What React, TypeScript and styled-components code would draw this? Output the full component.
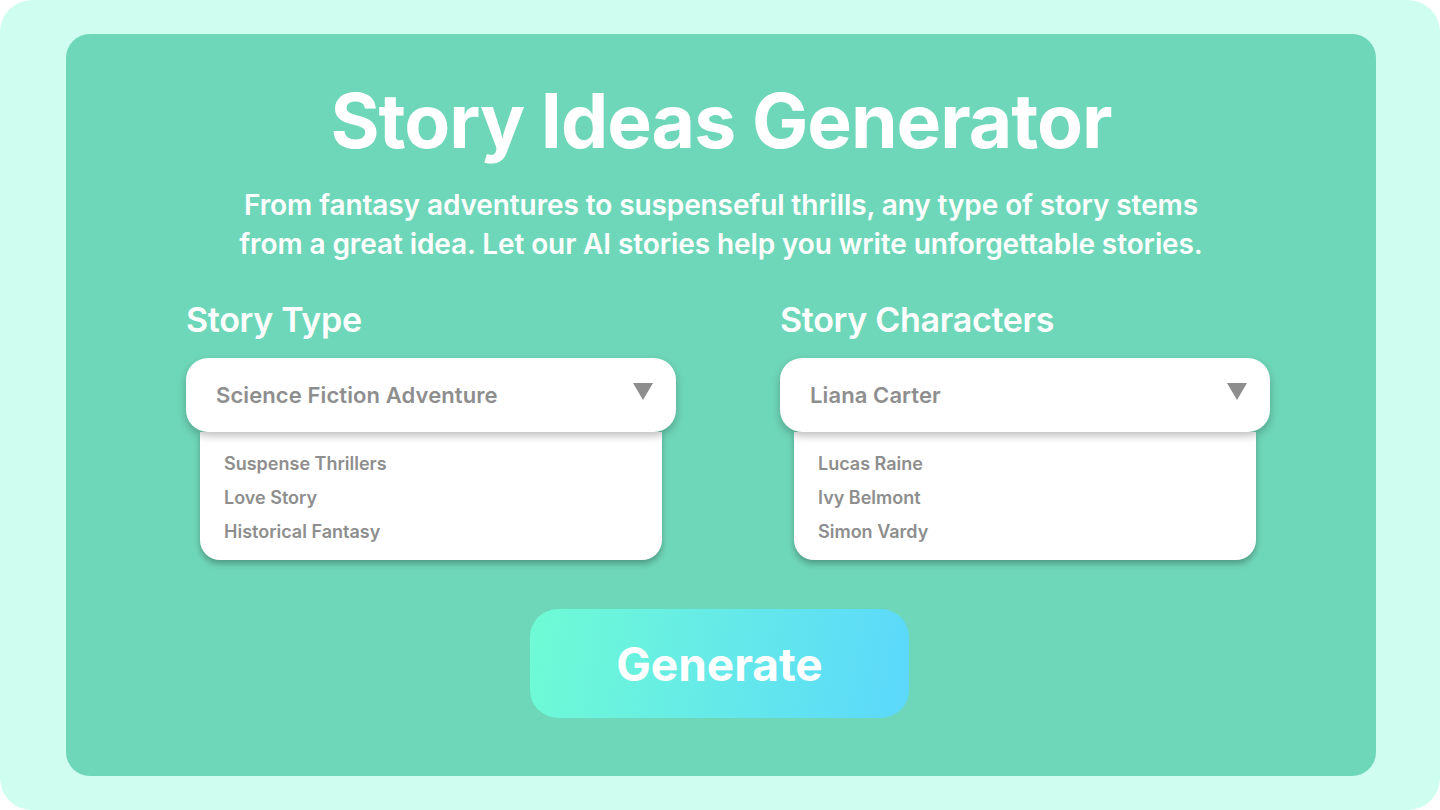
import styled, { createGlobalStyle } from "styled-components";

const GlobalStyle = createGlobalStyle`
  html, body {
    margin: 0;
    padding: 0;
    background: #ffffff;
  }
  body {
    font-family: Inter, "Open Sans", sans-serif;
  }
`;

const storyTypes = ["Suspense Thrillers", "Love Story", "Historical Fantasy"];
const characters = ["Lucas Raine", "Ivy Belmont", "Simon Vardy"];

type PickerProps = {
  label: string;
  value: string;
  options: string[];
};

function Picker({ label, value, options }: PickerProps) {
  return (
    <Column>
      <Label>{label}</Label>
      <SelectBox>
        <span>{value}</span>
        <Caret />
      </SelectBox>
      <OptionList>
        {options.map((o) => (
          <Option key={o}>{o}</Option>
        ))}
      </OptionList>
    </Column>
  );
}

export default function App() {
  return (
    <>
      <GlobalStyle />
      <Frame>
        <Card>
          <Title>Story Ideas Generator</Title>
          <Subtitle>
            From fantasy adventures to suspenseful thrills, any type of story stems
            <br />
            from a great idea. Let our AI stories help you write unforgettable stories.
          </Subtitle>
          <Pickers>
            <Picker label="Story Type" value="Science Fiction Adventure" options={storyTypes} />
            <Picker label="Story Characters" value="Liana Carter" options={characters} />
          </Pickers>
          <GenerateButton>Generate</GenerateButton>
        </Card>
      </Frame>
    </>
  );
}

const Frame = styled.div`
  width: 1440px;
  height: 810px;
  box-sizing: border-box;
  padding: 34px 64px 34px 66px;
  background: #cffdef;
  border-radius: 32px;
`;

const Card = styled.main`
  height: 100%;
  box-sizing: border-box;
  background: #6fd7b9;
  border-radius: 24px;
  display: flex;
  flex-direction: column;
  align-items: center;
  padding-top: 42px;
  color: #ffffff;
`;

const Title = styled.h1`
  margin: 0;
  font-size: 75px;
  font-weight: 700;
  line-height: 90px;
  letter-spacing: -1px;
`;

const Subtitle = styled.p`
  margin: 20px 0 0;
  font-size: 28px;
  font-weight: 600;
  line-height: 39px;
  text-align: center;
  letter-spacing: -0.1px;
`;

const Pickers = styled.div`
  display: grid;
  grid-template-columns: 490px 490px;
  column-gap: 104px;
  margin-top: 36px;
  padding-left: 14px;
`;

const Column = styled.div`
  display: flex;
  flex-direction: column;
`;

const Label = styled.div`
  font-size: 34px;
  font-weight: 600;
  line-height: 40px;
  margin-bottom: 18px;
  letter-spacing: -0.3px;
`;

const SelectBox = styled.div`
  position: relative;
  z-index: 2;
  height: 74px;
  box-sizing: border-box;
  display: flex;
  align-items: center;
  justify-content: space-between;
  padding: 0 23px 0 30px;
  background: #ffffff;
  border-radius: 22px;
  box-shadow: 0 4px 8px rgba(0, 0, 0, 0.25);
  color: #8e8e8e;
  font-size: 22px;
  font-weight: 600;
  letter-spacing: 0.1px;
`;

const Caret = styled.span`
  width: 0;
  height: 0;
  margin-top: -8px;
  border-left: 10px solid transparent;
  border-right: 10px solid transparent;
  border-top: 17px solid #8e8e8e;
`;

const OptionList = styled.ul`
  list-style: none;
  margin: 0 14px;
  padding: 15px 24px 11px;
  background: #ffffff;
  border-radius: 0 0 20px 20px;
  box-shadow: 0 4px 6px rgba(0, 0, 0, 0.28);
`;

const Option = styled.li`
  color: #8e8e8e;
  font-size: 18px;
  font-weight: 600;
  line-height: 34px;
`;

const GenerateButton = styled.button`
  margin: 49px 3px 0 0;
  width: 379px;
  height: 109px;
  border: none;
  border-radius: 28px;
  background: linear-gradient(100deg, #6ffbd4 0%, #5bd8fc 100%);
  color: #ffffff;
  font-family: inherit;
  font-size: 46px;
  font-weight: 700;
  cursor: pointer;
`;
